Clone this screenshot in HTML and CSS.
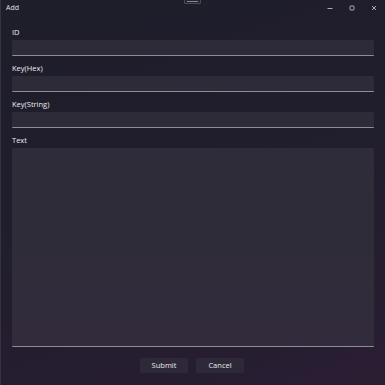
FILE: index.html
```html
<!DOCTYPE html>
<html>
<head>
<meta charset="utf-8">
<link rel="stylesheet" href="styles.css">
</head>
<body>
<div class="window">
  <div class="titlebar">
    <span class="title">Add</span>
    <div class="controls">
      <span class="ctl"><svg width="10" height="10" viewBox="0 0 10 10"><path d="M2.5 5.5h5" stroke="#cfcfd4" stroke-width="0.8"/></svg></span>
      <span class="ctl"><svg width="10" height="10" viewBox="0 0 10 10"><rect x="3" y="3" width="4" height="4" rx="0.8" fill="none" stroke="#cfcfd4" stroke-width="0.8"/></svg></span>
      <span class="ctl"><svg width="10" height="10" viewBox="0 0 10 10"><path d="M3 3l4 4M7 3l-4 4" stroke="#cfcfd4" stroke-width="0.8"/></svg></span>
    </div>
  </div>
  <div class="grip"><span class="grip-line"></span></div>
  <div class="form">
    <div class="field">
      <div class="label">ID</div>
      <div class="input"></div>
    </div>
    <div class="field">
      <div class="label">Key(Hex)</div>
      <div class="input"></div>
    </div>
    <div class="field">
      <div class="label">Key(String)</div>
      <div class="input"></div>
    </div>
    <div class="field grow">
      <div class="label">Text</div>
      <div class="input area"></div>
    </div>
    <div class="buttons">
      <button class="btn">Submit</button>
      <button class="btn">Cancel</button>
    </div>
  </div>
</div>
</body>
</html>
```
FILE: styles.css
```css
html, body {
  margin: 0;
  padding: 0;
  width: 385px;
  height: 385px;
  overflow: hidden;
  background: #1d1c28;
}
.window {
  position: relative;
  width: 385px;
  height: 385px;
  box-sizing: border-box;
  border-left: 1px solid #34323f;
  background: linear-gradient(160deg, #1e1d2a 0%, #201e2c 45%, #261d31 80%, #2a1e33 100%);
  font-family: "Open Sans", "Noto Sans", "Liberation Sans", sans-serif;
  color: #e6e6ea;
  display: flex;
  flex-direction: column;
}
.titlebar {
  height: 16px;
  display: flex;
  align-items: center;
  justify-content: space-between;
  padding-left: 5px;
}
.title {
  font-size: 7px;
  color: #e0e0e4;
  line-height: 16px;
}
.controls {
  display: flex;
  height: 16px;
}
.ctl {
  width: 22px;
  height: 16px;
  display: flex;
  align-items: center;
  justify-content: center;
}
.grip {
  position: absolute;
  left: 183px;
  top: -1px;
  width: 17px;
  height: 5px;
  box-sizing: border-box;
  border: 1px solid #4a4955;
  border-radius: 0 0 1px 1px;
  background: #25242f;
  display: flex;
  align-items: center;
  justify-content: center;
}
.grip-line {
  display: block;
  width: 11px;
  height: 1px;
  background: #8a8992;
}
.form {
  flex: 1;
  display: flex;
  flex-direction: column;
  padding: 10px 11px 12px 11px;
}
.field {
  display: flex;
  flex-direction: column;
  margin-bottom: 6px;
}
.field.grow {
  flex: 1;
  margin-bottom: 11px;
}
.label {
  font-size: 7.5px;
  line-height: 12px;
  height: 12px;
  margin-bottom: 2px;
  color: #ececf0;
}
.input {
  height: 15px;
  background: #2d2b38;
  border-radius: 2px 2px 1px 1px;
  border-bottom: 1px solid #8f8d98;
}
.input.area {
  flex: 1;
  background: linear-gradient(180deg, #2e2c39 0%, #302c3a 70%, #322b3b 100%);
}
.buttons {
  display: flex;
  justify-content: center;
  gap: 8px;
  padding-right: 2px;
}
.btn {
  width: 48px;
  height: 15px;
  padding: 0;
  border: none;
  border-radius: 2px;
  background: #2e2939;
  color: #e8e8ec;
  font-family: "Open Sans", "Noto Sans", "Liberation Sans", sans-serif;
  font-size: 7.5px;
  line-height: 15px;
}
```
